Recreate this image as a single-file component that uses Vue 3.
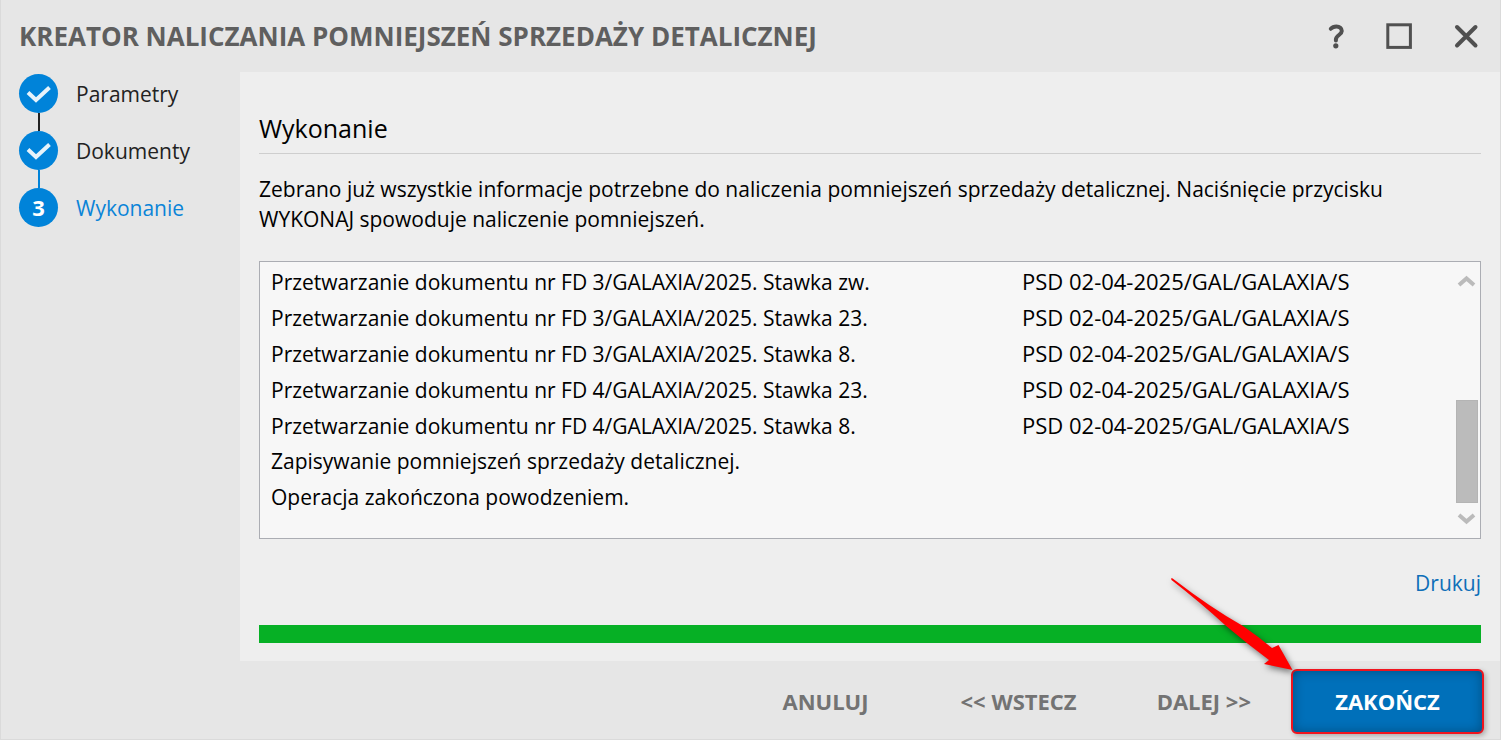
<template>
    <div class="wizard">
        <header class="titlebar">
            <h1>Kreator naliczania pomniejszeń sprzedaży detalicznej</h1>
            <div class="window-controls">
                <button type="button" aria-label="Pomoc">
                    <svg width="28" height="28" viewBox="0 0 28 28">
                        <path d="M12.8 6.8C14.2 5.2 16 4.5 18.4 4.5c3.3 0 5.4 1.7 5.4 4.5 0 3.9-5.9 4.2-5.9 8.5v1" />
                        <circle cx="17.8" cy="23.8" r="2.6" />
                    </svg>
                </button>
                <button type="button" aria-label="Maksymalizuj">
                    <svg width="28" height="28" viewBox="0 0 28 28">
                        <rect x="2.8" y="2.8" width="22.6" height="22.6" stroke-width="3" />
                    </svg>
                </button>
                <button type="button" aria-label="Zamknij">
                    <svg width="28" height="28" viewBox="0 0 28 28">
                        <path d="M5 5L23.5 23.5M23.5 5L5 23.5" />
                    </svg>
                </button>
            </div>
        </header>

        <div class="body">
            <ol class="steps">
                <li v-for="(step, index) in steps" :key="step" :class="{ current: index === currentStep }">
                    <span class="marker">
                        <svg v-if="index < currentStep" width="39" height="39" viewBox="0 0 39 39">
                            <path d="M9 18.5L17 26L30.5 13.5" />
                        </svg>
                        <template v-else>{{ index + 1 }}</template>
                    </span>
                    <span>{{ step }}</span>
                </li>
            </ol>

            <main class="panel">
                <h2>Wykonanie</h2>
                <p class="info">
                    Zebrano już wszystkie informacje potrzebne do naliczenia pomniejszeń sprzedaży detalicznej.
                    Naciśnięcie przycisku WYKONAJ spowoduje naliczenie pomniejszeń.
                </p>

                <div class="log">
                    <table>
                        <tbody>
                            <tr v-for="(entry, index) in entries" :key="index">
                                <td>{{ entry.text }}</td>
                                <td class="number">{{ entry.number }}</td>
                            </tr>
                        </tbody>
                    </table>
                    <div class="scrollbar">
                        <svg width="22" height="16" viewBox="0 0 22 16">
                            <path d="M3 12L10.5 5.5L18 12" />
                        </svg>
                        <div class="track">
                            <div class="thumb"></div>
                        </div>
                        <svg width="22" height="16" viewBox="0 0 22 16">
                            <path d="M3 4L10.5 10.5L18 4" />
                        </svg>
                    </div>
                </div>

                <a class="print" href="#">Drukuj</a>
                <div class="progress" role="progressbar" aria-label="Postęp" :aria-valuenow="progress">
                    <div class="bar" :style="{ width: `${progress}%` }"></div>
                </div>
            </main>
        </div>

        <footer class="actions">
            <button type="button" class="cancel">ANULUJ</button>
            <button type="button" class="back">&lt;&lt; WSTECZ</button>
            <button type="button" class="next">DALEJ &gt;&gt;</button>
            <div class="finish">
                <button type="button">ZAKOŃCZ</button>
                <svg class="arrow" width="130" height="100" viewBox="0 0 130 100">
                    <path d="M10 9.5Q11 8.5 13 10.5Q50 39 82 57Q98 68 111 79L117.5 76L131.5 101L103 95L108 91Q85 74 64 56Q40 34 10.5 11Z" />
                </svg>
            </div>
        </footer>
    </div>
</template>

<script setup>
import { ref } from 'vue'

const steps = ['Parametry', 'Dokumenty', 'Wykonanie']
const currentStep = ref(2)
const progress = ref(100)

const number = 'PSD 02-04-2025/GAL/GALAXIA/S'
const entries = ref([
    { text: 'Przetwarzanie dokumentu nr FD 3/GALAXIA/2025. Stawka zw.', number },
    { text: 'Przetwarzanie dokumentu nr FD 3/GALAXIA/2025. Stawka 23.', number },
    { text: 'Przetwarzanie dokumentu nr FD 3/GALAXIA/2025. Stawka 8.', number },
    { text: 'Przetwarzanie dokumentu nr FD 4/GALAXIA/2025. Stawka 23.', number },
    { text: 'Przetwarzanie dokumentu nr FD 4/GALAXIA/2025. Stawka 8.', number },
    { text: 'Zapisywanie pomniejszeń sprzedaży detalicznej.' },
    { text: 'Operacja zakończona powodzeniem.' },
])
</script>

<style>
body {
    margin: 0;
    background: #e6e6e6;
}
</style>

<style scoped>
.wizard {
    box-sizing: border-box;
    display: flex;
    flex-direction: column;
    min-height: 100vh;
    border: 1px solid #dadada;
    border-top: 0;
    background: #e6e6e6;
    color: #000;
    font-family: "Segoe UI", "Open Sans", "Noto Sans", sans-serif;
    font-size: 21px;
    line-height: 30px;
}

button {
    padding: 0;
    border: 0;
    background: none;
    color: inherit;
    font: inherit;
}

.titlebar {
    display: flex;
    align-items: center;
    justify-content: space-between;
    height: 72px;
    padding: 0 20px 0 18px;
}

h1 {
    margin: 0;
    color: #5f5f5f;
    font-size: 26px;
    font-weight: 700;
    text-transform: uppercase;
}

.window-controls {
    display: flex;
    gap: 39px;
}

.window-controls button {
    height: 28px;
}

.window-controls svg {
    display: block;
    fill: none;
    stroke: #505050;
    stroke-width: 4;
    stroke-linecap: round;
}

.window-controls circle {
    fill: #505050;
    stroke: none;
}

.body {
    flex: 1;
    display: flex;
}

.steps {
    box-sizing: border-box;
    flex: 0 0 239px;
    display: flex;
    flex-direction: column;
    gap: 18px;
    margin: 0;
    padding: 2px 0 0 18px;
    list-style: none;
    color: #222;
}

.steps li {
    display: flex;
    align-items: center;
    gap: 18px;
}

.steps .current {
    color: #0a84d8;
}

.marker {
    position: relative;
    width: 39px;
    height: 39px;
    border-radius: 50%;
    background: #0083d9;
    color: #fff;
    font-size: 22px;
    font-weight: 700;
    line-height: 39px;
    text-align: center;
}

.marker svg {
    display: block;
    fill: none;
    stroke: #e6f3fb;
    stroke-width: 4;
}

/* connector to the previous step */
.steps li + li .marker::before {
    content: '';
    position: absolute;
    bottom: 100%;
    left: 19px;
    width: 2px;
    height: 18px;
    background: #222;
}

.steps li + .current .marker::before {
    background: #0083d9;
}

.panel {
    flex: 1;
    display: flex;
    flex-direction: column;
    min-width: 0;
    padding: 41px 19px 18px 19px;
    background: #eee;
}

h2 {
    margin: 0;
    padding-bottom: 10px;
    border-bottom: 1px solid #cecece;
    font-size: 25px;
    font-weight: 400;
}

.info {
    margin: 20px 0 27px;
}

.log {
    flex: 1;
    display: flex;
    padding: 2px;
    border: 1px solid #abadb3;
    background: #f7f7f7;
}

table {
    flex: 1;
    align-self: flex-start;
    border-collapse: collapse;
}

td {
    box-sizing: border-box;
    height: 36px;
    padding: 0 0 0 9px;
    line-height: 34px;
    vertical-align: baseline;
    white-space: nowrap;
}

.number {
    width: 443px;
    font-size: 22px;
}

.scrollbar {
    display: flex;
    flex-direction: column;
    justify-content: space-between;
    width: 22px;
    padding: 9px 0;
}

.scrollbar svg {
    fill: none;
    stroke: #bbb;
    stroke-width: 4;
}

.track {
    flex: 1;
    display: flex;
    align-items: flex-end;
    padding: 8px 0;
}

.thumb {
    box-sizing: border-box;
    width: 100%;
    height: 50%;
    border: 1px solid #b4b4b4;
    background: #bbb;
}

.print {
    align-self: flex-end;
    margin: 29px 0 27px;
    color: #0f6fb8;
    text-decoration: none;
}

.progress {
    height: 18px;
}

.bar {
    height: 100%;
    background: #06b025;
}

.actions {
    box-sizing: border-box;
    display: flex;
    align-items: center;
    justify-content: flex-end;
    height: 78px;
    padding: 3px 16px 0 0;
    color: #737373;
    font-size: 22px;
    font-weight: 700;
}

.actions button {
    padding-bottom: 2px;
}

.cancel {
    margin-right: 92px;
}

.back {
    margin-right: 80px;
}

.next {
    margin-right: 40px;
}

.finish {
    position: relative;
}

.finish button {
    display: block;
    width: 193px;
    height: 65px;
    border: 2px solid #f0141e;
    border-radius: 6px;
    background: #0070ba;
    box-shadow: inset 0 0 12px rgba(0, 0, 0, .3), 2px 2px 5px rgba(0, 0, 0, .25);
    color: #fff;
}

.arrow {
    position: absolute;
    right: 100%;
    bottom: 100%;
    overflow: visible;
    fill: #f00;
    filter: drop-shadow(2px 3px 3px rgba(0, 0, 0, .5));
    pointer-events: none;
}
</style>
